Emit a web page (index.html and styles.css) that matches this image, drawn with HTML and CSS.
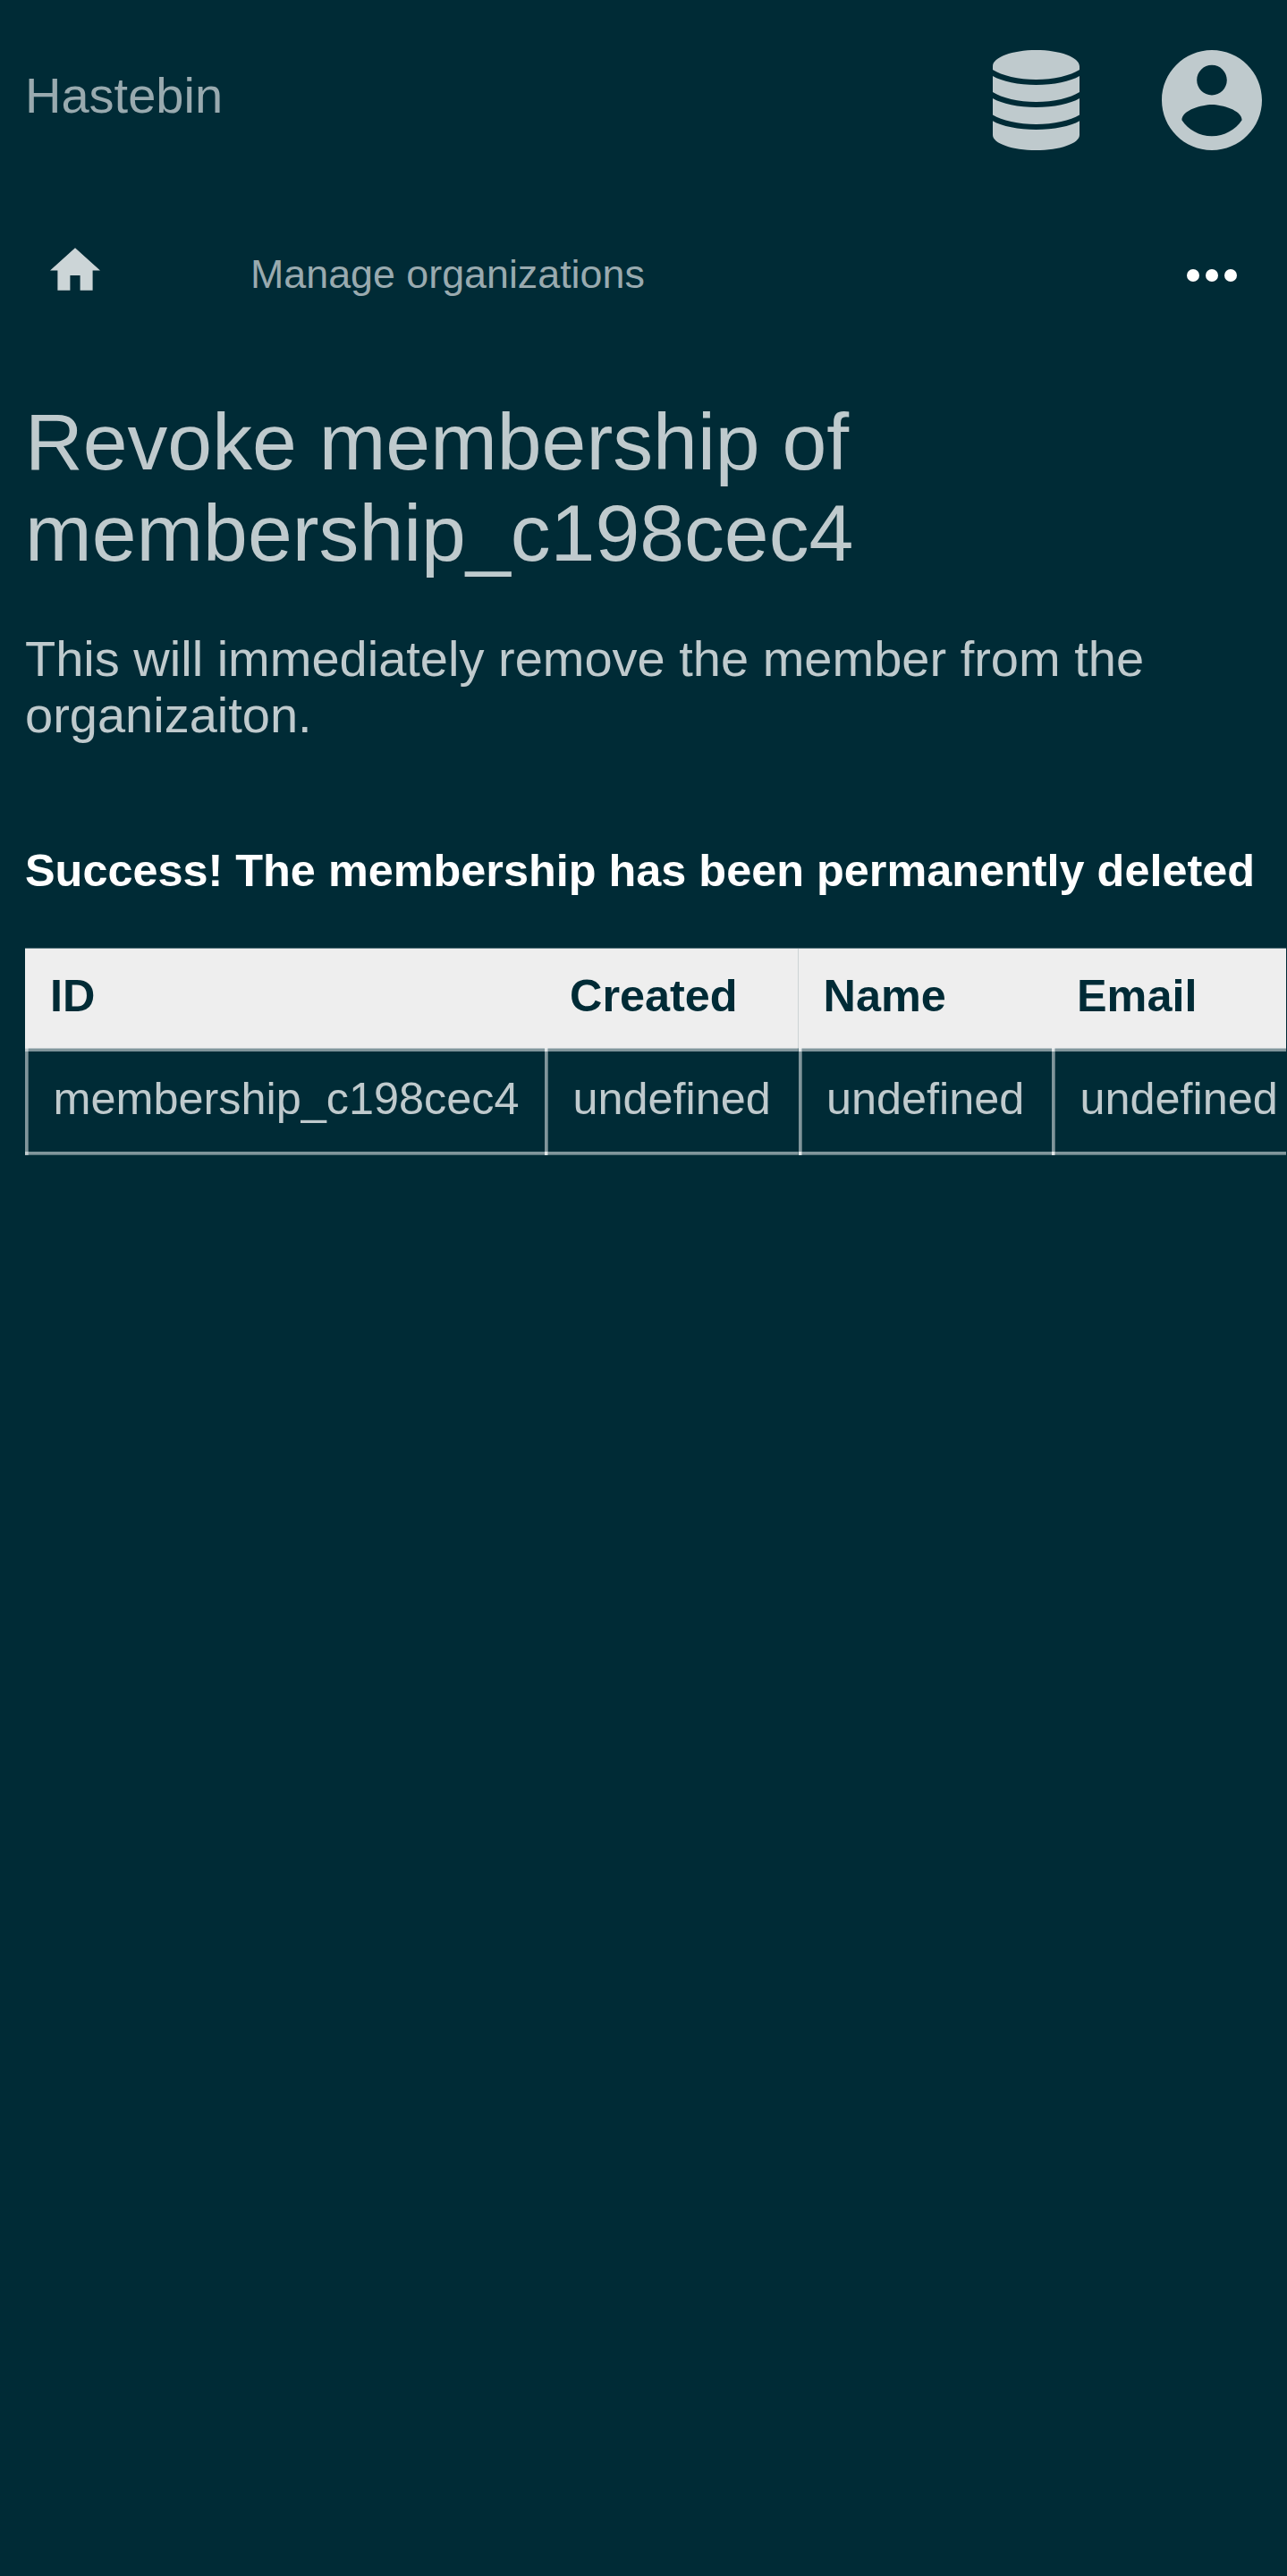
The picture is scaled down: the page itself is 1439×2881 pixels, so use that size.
FILE: index.html
```html
<!DOCTYPE html>
<html lang="en">
<head>
<meta charset="utf-8">
<title>Hastebin</title>
<link rel="stylesheet" href="styles.css">
</head>
<body>
<header class="topbar">
  <a class="brand">Hastebin</a>
  <div class="actions">
    <svg class="database" viewBox="0 0 97 112"><path d="M0 18C0 8 22 0 48.500 0S97 8 97 18v4C87 28.500 68 33 48.500 33S10 28.500 0 22zM0 29C10 35 29 39 48.500 39S87 35 97 29v18C87 53.500 68 58 48.500 58S10 53.500 0 47zM0 54C10 60 29 64 48.500 64S87 60 97 54v18.500C87 78.500 68 83 48.500 83S10 78.500 0 72.500zM0 79.300C10 85.300 29 89 48.500 89S87 85.300 97 79.300V95C97 104.500 75 112 48.500 112S0 104.500 0 95z"/></svg>
    <svg class="account" viewBox="2 2 20 20"><path d="M12 2C6.480 2 2 6.480 2 12s4.480 10 10 10 10-4.480 10-10S17.520 2 12 2zm0 3c1.660 0 3 1.340 3 3s-1.340 3-3 3-3-1.340-3-3 1.340-3 3-3zm0 14.200c-2.500 0-4.710-1.280-6-3.220.030-1.990 4-3.080 6-3.080 1.990 0 5.970 1.090 6 3.080-1.290 1.940-3.500 3.220-6 3.220z"/></svg>
  </div>
</header>
<nav class="menu">
  <svg class="home" viewBox="2 3 20 17"><path d="M10 20v-6h4v6h5v-8h3L12 3 2 12h3v8z"/></svg>
  <a class="link">Manage organizations</a>
  <svg class="more" viewBox="0 0 56 14"><circle cx="7" cy="7" r="7"/><circle cx="28" cy="7" r="7"/><circle cx="49" cy="7" r="7"/></svg>
</nav>
<main>
  <h1>Revoke membership of membership_c198cec4</h1>
  <h2>This will immediately remove the member from the organizaiton.</h2>
  <p class="success">Success! The membership has been permanently deleted</p>
  <table>
    <thead><tr><th>ID</th><th>Created</th><th>Name</th><th>Email</th></tr></thead>
    <tbody><tr><td>membership_c198cec4</td><td>undefined</td><td>undefined</td><td>undefined</td></tr></tbody>
  </table>
</main>
</body>
</html>
```
FILE: styles.css
```css
* { box-sizing: border-box; }
html { background: #002b36; }
body { margin: 0; min-height: 2881px; overflow: hidden; background: #002b36; color: #bfcacd; font-family: "Liberation Sans", Arial, sans-serif; }
svg { display: block; fill: currentColor; }
.topbar { display: flex; justify-content: space-between; align-items: center; height: 224px; padding: 0 28.5px 0 28px; }
.brand { margin-bottom: 12px; font-size: 56px; color: #99aaaf; }
.actions { display: flex; gap: 92px; }
.database { width: 97px; height: 112px; }
.account { width: 112px; height: 112px; }
.menu { display: flex; align-items: center; height: 168px; padding: 0 56.5px 0 56px; }
.home { width: 56px; height: 48px; margin-bottom: 14px; color: #ccd5d7; }
.link { margin: 0 0 4px 168px; font-size: 44.8px; color: #99aaaf; }
.more { width: 56px; height: 14px; margin-left: auto; color: #fff; }
main { width: 1438px; padding: 51px 0 49px 28px; overflow: hidden; }
h1 { margin: 0; font-size: 89.6px; font-weight: 400; line-height: 102px; }
h2 { margin: 58px 0 0; font-size: 56px; font-weight: 400; line-height: 63px; }
.success { margin: 114px 0 0; font-size: 50.4px; line-height: 57px; font-weight: 700; color: #fff; white-space: nowrap; }
table { table-layout: fixed; width: 1431.5px; margin-top: 58px; border-collapse: separate; border-spacing: 0; font-size: 50.4px; line-height: 56px; white-space: nowrap; }
th { height: 112px; padding: 0 28px 6px; text-align: left; color: #002b36; background: #eee; border-top: 1px solid #5f7a82; }
th:first-child { width: 581px; }
th:nth-child(n+2) { width: 283.5px; }
th:nth-child(2) { background: linear-gradient(#cdd3d5, #cdd3d5) right / 1px 100% no-repeat #eee; }

/* Translucent cell rules: they brighten where they cross */
td {
  --rule: rgba(255, 255, 255, .5);
  --soft: rgba(255, 255, 255, .35);
  height: 120px;
  padding: 0 0 7px 31.5px;
  background:
    linear-gradient(to right, var(--rule) 3px, var(--soft) 3px) left / 4px 100% no-repeat,
    linear-gradient(rgba(255, 255, 255, .72) 1px, var(--rule) 1px) top / 100% 4px no-repeat,
    linear-gradient(var(--rule) 3px, var(--soft) 3px) bottom / 100% 4px no-repeat;
}
td + td {
  background:
    linear-gradient(var(--rule), var(--rule)) left top / 3px 4px no-repeat,
    linear-gradient(var(--rule), var(--rule)) left bottom / 3px 4px no-repeat,
    linear-gradient(to right, var(--rule) 3px, var(--soft) 3px) left / 4px 100% no-repeat,
    linear-gradient(rgba(255, 255, 255, .72) 1px, var(--rule) 1px) top / 100% 4px no-repeat,
    linear-gradient(var(--rule) 3px, var(--soft) 3px) bottom / 100% 4px no-repeat;
}
```
